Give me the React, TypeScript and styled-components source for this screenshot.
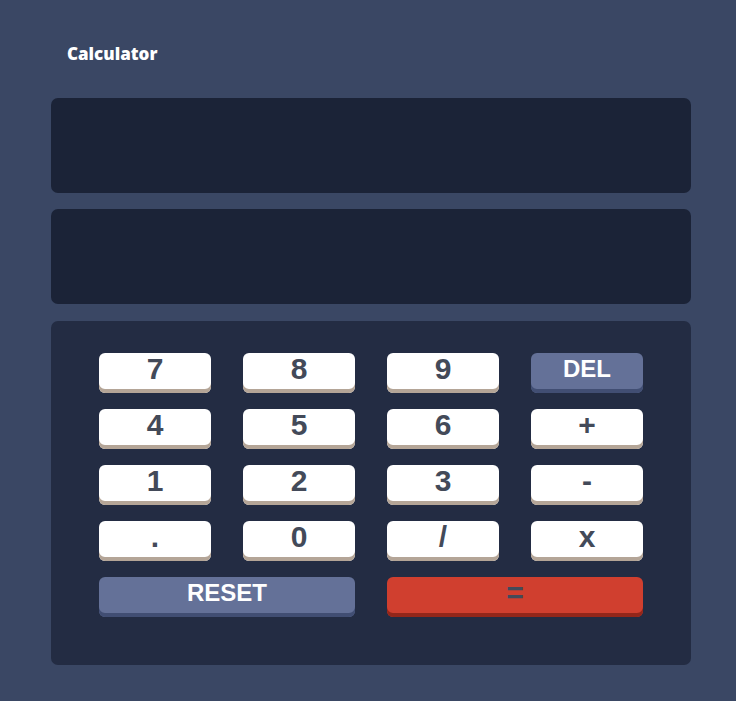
import React from "react";
import styled, { createGlobalStyle } from "styled-components";

const Global = createGlobalStyle`
  html, body { margin: 0; padding: 0; background: #3a4764; }
  body { font-family: "Liberation Sans", Arial, sans-serif; }
`;

const Page = styled.div`
  width: 736px;
  height: 701px;
  background: #3a4764;
  padding: 43px 0 0 51px;
  box-sizing: border-box;
`;

const Title = styled.h1`
  margin: 0 0 0 16px;
  height: 55px;
  font-family: "Open Sans", "Noto Sans", sans-serif;
  font-weight: 800;
  font-size: 17px;
  line-height: 22px;
  color: #ffffff;
`;

const Column = styled.div`
  width: 640px;
  display: flex;
  flex-direction: column;
  gap: 16px;
`;

const Display = styled.div`
  height: 95px;
  background: #1b2337;
  border-radius: 7px;
`;

const Keypad = styled.div`
  margin-top: 1px;
  background: #232c43;
  border-radius: 7px;
  padding: 32px 48px 48px;
  display: grid;
  grid-template-columns: repeat(4, 112px);
  grid-auto-rows: 40px;
  column-gap: 32px;
  row-gap: 16px;
`;

type Variant = "light" | "blue" | "red";

const palette: Record<Variant, { bg: string; shadow: string; fg: string }> = {
  light: { bg: "#ffffff", shadow: "#b4a597", fg: "#434a59" },
  blue: { bg: "#647198", shadow: "#414e73", fg: "#ffffff" },
  red: { bg: "#d03f2f", shadow: "#93261a", fg: "#434a59" },
};

const Key = styled.button<{ $variant: Variant; $wide?: boolean; $small?: boolean }>`
  grid-column: ${(p) => (p.$wide ? "span 2" : "span 1")};
  border: none;
  margin: 0;
  padding: 0 0 8px;
  border-radius: 6px;
  background: ${(p) => palette[p.$variant].bg};
  box-shadow: inset 0 -4px 0 ${(p) => palette[p.$variant].shadow};
  color: ${(p) => palette[p.$variant].fg};
  font-family: "Liberation Sans", Arial, sans-serif;
  font-weight: 700;
  font-size: ${(p) => (p.$small ? "24px" : "30px")};
  line-height: 1;
  display: flex;
  align-items: center;
  justify-content: center;
  cursor: pointer;
`;

const keys: { label: string; variant?: Variant; small?: boolean }[] = [
  { label: "7" }, { label: "8" }, { label: "9" }, { label: "DEL", variant: "blue", small: true },
  { label: "4" }, { label: "5" }, { label: "6" }, { label: "+" },
  { label: "1" }, { label: "2" }, { label: "3" }, { label: "-" },
  { label: "." }, { label: "0" }, { label: "/" }, { label: "x" },
];

export default function App() {
  return (
    <>
      <Global />
      <Page>
        <Title>Calculator</Title>
        <Column>
          <Display />
          <Display />
          <Keypad>
            {keys.map((k) => (
              <Key key={k.label} $variant={k.variant ?? "light"} $small={k.small}>
                {k.label}
              </Key>
            ))}
            <Key $variant="blue" $wide $small>RESET</Key>
            <Key $variant="red" $wide>=</Key>
          </Keypad>
        </Column>
      </Page>
    </>
  );
}
